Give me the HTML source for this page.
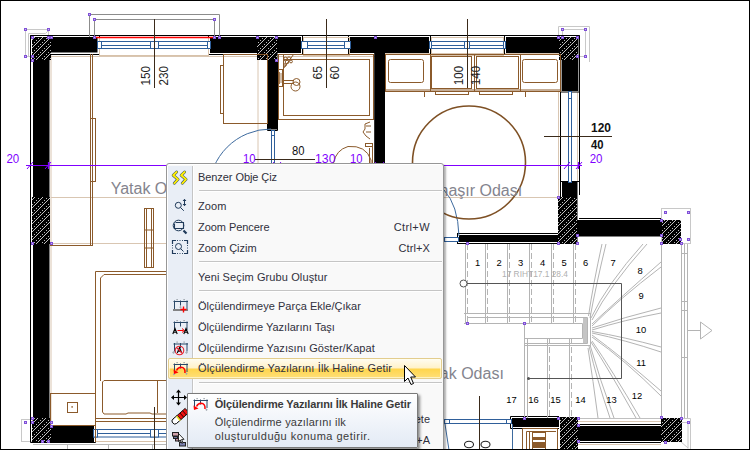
<!DOCTYPE html>
<html><head><meta charset="utf-8">
<style>
html,body{margin:0;padding:0;width:750px;height:450px;overflow:hidden;background:#fff;}
body{position:relative;font-family:"Liberation Sans",sans-serif;}
#cad{position:absolute;left:0;top:0;}
.menu{position:absolute;left:166px;top:163px;width:276px;height:300px;background:#f9f9f9;border:1px solid #979797;border-radius:3px 3px 0 0;box-shadow:2px 2px 2px rgba(0,0,0,0.3), inset 1px 1px 0 #fff;}
.menu .col{position:absolute;left:1px;top:2px;width:24px;height:100%;background:#e9eef6;border-right:1px solid #c5c5c5;box-shadow:1px 0 0 #fff;}
.menu .t,.menu .s{position:absolute;left:31px;font-size:11px;line-height:12px;color:#30303c;white-space:nowrap;}
.menu .s{left:auto;right:13px;}
.menu .sep{position:absolute;left:32px;right:1px;height:0;border-top:1px solid #c5c5c5;border-bottom:1px solid #fff;}
.menu .hl{position:absolute;left:1px;width:272px;height:19px;top:194px;border:1px solid #e3cd8e;border-radius:2px;background:linear-gradient(#fffcf0 0%,#fff2c8 48%,#ffd54c 52%,#ffdf78 100%);box-shadow:inset 0 0 0 1px rgba(255,255,240,0.6);}
.menu svg{position:absolute;}
.tip{position:absolute;left:187px;top:393px;width:229px;height:53px;border:1px solid #7a7a7a;border-radius:1px;background:linear-gradient(#ffffff,#e3eaf5);box-shadow:2px 2px 3px rgba(0,0,0,0.45);color:#3a3a3a;white-space:nowrap;}
.tip span{position:absolute;left:26.7px;font-size:11px;line-height:12px;}
.tip .tt{font-weight:bold;}
.tip svg{position:absolute;}
</style></head><body>
<svg id="cad" width="750" height="450" viewBox="0 0 750 450">
<defs>
<pattern id="hatch" patternUnits="userSpaceOnUse" width="8" height="8" x="0" y="0">
<rect width="8" height="8" fill="#000"/>
<path d="M-1 9 L9 -1" stroke="#d8d8d8" stroke-width="0.9"/>
<rect x="2" y="2" width="1" height="1" fill="#bbb"/><rect x="6" y="6" width="1" height="1" fill="#bbb"/>
<rect x="4" y="0" width="1" height="1" fill="#bbb"/><rect x="0" y="4" width="1" height="1" fill="#bbb"/>
</pattern>
</defs>
<rect x="0.5" y="0.5" width="749" height="449" fill="#fff" stroke="#000" stroke-width="1"/>

<!-- light tan room boundaries -->
<g stroke="#d9c6b2" stroke-width="1" fill="none">
<line x1="51" y1="54" x2="51" y2="425"/>
<line x1="50" y1="56.5" x2="375" y2="56.5"/>
<line x1="51" y1="197.5" x2="166" y2="197.5"/>
<line x1="51" y1="243.5" x2="166" y2="243.5"/>
<line x1="258" y1="58" x2="258" y2="163"/>
<line x1="443" y1="197.5" x2="558" y2="197.5"/>
<line x1="558.5" y1="92" x2="558.5" y2="197"/>
<line x1="577.5" y1="92" x2="577.5" y2="181"/>
<line x1="385" y1="53.5" x2="560" y2="53.5"/>
<line x1="578" y1="421.5" x2="661" y2="421.5"/>
<line x1="578" y1="444.5" x2="661" y2="444.5"/>
</g>

<g fill="none" stroke="#c8c8c8" stroke-width="1">
<rect x="25.5" y="29.5" width="23" height="27"/>
<path d="M28.5 56 V33.5 H45.5 L48 31"/>
<path d="M558.5 37 V26.5 H589.5 V62"/>
<path d="M562.5 37 V29.5 H585.5 V56.5 H578"/>
<rect x="661.5" y="208.5" width="29" height="35"/>
<path d="M661.5 418.5 H690.5 V449 M665 422.5 H688 V448.5 M680 441 L688 448"/>
<line x1="578" y1="418.5" x2="661" y2="418.5" stroke="#c0c0c0"/>
<rect x="21.5" y="419.5" width="12" height="22"/>
</g>
<!-- walls -->
<g fill="#000">
<rect x="33" y="37" width="64.5" height="15.5"/>
<rect x="33" y="37" width="16.5" height="388"/>
<rect x="33" y="426" width="61" height="16"/>
<rect x="210" y="37" width="91" height="16"/>
<rect x="268" y="53" width="9.5" height="76.5"/>
<rect x="350" y="37" width="79" height="16"/>
<rect x="374.2" y="53" width="10.8" height="115"/>
<rect x="506" y="37" width="72.5" height="16"/>
<rect x="561.6" y="53" width="16.8" height="38"/>
<rect x="562" y="182" width="15.5" height="62"/>
<rect x="577" y="220" width="104" height="16.5"/>
<rect x="459" y="235" width="100" height="7"/>
<rect x="512" y="418" width="47" height="9"/>
<rect x="578" y="426" width="84" height="15"/>
</g>
<g fill="none" stroke="#000" stroke-width="1">
<path d="M30.5 420 V35.5 H99.5 V54.5 H50"/>
<path d="M267.5 54.5 H208.5 V35.5 H302.5 V54.5 H277.5 M267.5 54.5 V130.5 H277.5 V60"/>
<path d="M348.5 54.5 V35.5 H430.5 V54.5"/>
<path d="M504.5 54.5 V35.5 H579.5 V195 M560.5 54.5 V197 M560.5 92 H579"/>
<path d="M560.5 181.5 H579"/>
<rect x="457.5" y="233.5" width="101" height="10"/>
<path d="M579 218.5 H661 M578 424.5 H661 M578 442.5 H661"/>
<path d="M30.5 420 V442.5 H95.5 V424.5"/>
<path d="M33 444.5 H166 M67.5 444 V449 M108.5 444 V449 M152.5 444 V449" stroke="#b8b8b8"/>
<path d="M559 416.5 H510.5 V428.5 H559"/>
</g>
<!-- hatches -->
<g fill="url(#hatch)">
<rect x="32" y="37" width="19" height="23"/>
<rect x="257" y="37" width="20" height="23"/>
<rect x="559" y="37" width="19" height="23"/>
<rect x="32" y="197" width="18" height="47"/>
<rect x="32" y="418" width="19" height="24"/>
<rect x="558" y="197" width="19" height="47"/>
<rect x="662" y="220" width="19" height="24"/>
<rect x="560" y="417" width="18" height="33"/>
<rect x="661" y="418" width="21" height="24"/>
</g>

<!-- windows -->
<g fill="none" stroke="#d8c2aa" stroke-width="1">
<rect x="99.5" y="37.5" width="109" height="18"/>
<rect x="303.5" y="37.5" width="46" height="18"/>
<rect x="431.5" y="37.5" width="72" height="18"/>
</g>
<path d="M30.5 35.5 H579.5" stroke="#000" stroke-width="1"/>
<g fill="#fff" stroke="#2f5f9a" stroke-width="1">
<rect x="97.5" y="41.5" width="113" height="7"/>
<line x1="101" y1="45.5" x2="208" y2="45.5"/>
<rect x="97.5" y="41.5" width="4" height="7"/>
<rect x="207.5" y="41.5" width="3" height="7"/>
<rect x="150.5" y="41.5" width="4" height="7"/>
<rect x="154.5" y="41.5" width="4" height="7"/>
<rect x="301.5" y="41.5" width="49" height="7"/>
<line x1="307" y1="45.5" x2="344" y2="45.5"/>
<rect x="301.5" y="41.5" width="6" height="7"/>
<rect x="344.5" y="41.5" width="6" height="7"/>
<rect x="429.5" y="41.5" width="76" height="7"/>
<line x1="431" y1="45.5" x2="504" y2="45.5"/>
<rect x="429.5" y="41.5" width="2" height="7"/>
<rect x="464.5" y="41.5" width="3" height="7"/>
<rect x="467.5" y="41.5" width="2" height="7"/>
<rect x="503.5" y="41.5" width="2" height="7"/>
<rect x="568.5" y="91.5" width="3" height="91"/>
<line x1="568.5" y1="98.5" x2="571.5" y2="98.5"/>
<rect x="271.5" y="130.5" width="3" height="33"/>
<line x1="271.5" y1="135.5" x2="274.5" y2="135.5"/>
<rect x="93.5" y="429.5" width="80" height="7.5"/>
<line x1="97" y1="433.5" x2="170" y2="433.5"/>
<rect x="93.5" y="429.5" width="4" height="7.5"/>
<rect x="150.5" y="429.5" width="4" height="7.5"/><rect x="154.5" y="429.5" width="4" height="7.5"/>
<rect x="444.5" y="419.5" width="67" height="4"/>
<rect x="444.5" y="419.5" width="5" height="4"/><rect x="506.5" y="419.5" width="5" height="4"/>
<rect x="444.5" y="237.5" width="14" height="4"/>
</g>
<g fill="none" stroke="#3d6a9e" stroke-width="1">
<path d="M271 129 A62 62 0 0 0 209 191"/>
<path d="M444 190 Q458 205 459 236"/>
<path d="M445 424 L449 450 M512.5 424 V450"/>
</g>

<!-- red line -->
<line x1="95" y1="37.5" x2="213" y2="37.5" stroke="#f00" stroke-width="1.5"/>

<!-- grey selection dims -->
<g fill="none" stroke="#8c8c8c" stroke-width="1">
<path d="M89.5 37 V14.5 H219.5 V37"/>
<path d="M94.5 37 V19.5 H214.5 V37"/>
</g>


<!-- brown furniture -->
<g fill="none" stroke="#8b5a2b" stroke-width="1">
<path d="M90.5 54 V245 M92.5 54 V245 M50 245.5 H93"/>
<rect x="90.5" y="118.5" width="5" height="63"/>
<rect x="144.5" y="208.5" width="9" height="59"/>
<path d="M146.5 209 V267 M151.5 209 V267 M145 230 H153 M145 248 H153"/>
<path d="M95.5 425 V271.5 H170"/>
<path d="M100.5 381 V278 L104 274.5 H170"/>
<path d="M102.5 382 L104 380.5 H166 M102.5 382 V412 L104 414 H126 L128 413 H150 L152 414 H166"/>
<path d="M157.5 381 V413"/>
<rect x="50.5" y="393.5" width="45" height="32"/>
<rect x="67.5" y="402.5" width="10" height="10"/>
<path d="M95 418.5 H170 M95 421.5 H170"/>
<path d="M95.5 424 V442"/>
<rect x="223.5" y="54.5" width="44" height="69"/>
<rect x="220.5" y="65.5" width="3" height="48"/>
<rect x="278.5" y="54.5" width="95" height="65"/>
<rect x="283.5" y="59.5" width="86" height="56"/>
<path d="M283.5 54.5 V68.5 L293.5 54.5"/>
<circle cx="285.5" cy="59" r="1.8"/><circle cx="289" cy="58.5" r="1.6"/><circle cx="287" cy="62" r="1.8"/><circle cx="291" cy="61.5" r="1.4"/><circle cx="285" cy="65" r="1.3"/>
<rect x="278.5" y="69.5" width="4" height="17"/>
<path d="M279.5 72 V84 M281 73 V83" stroke-width="0.8"/>
<path d="M282.5 80.5 H293 M282.5 83.5 H293"/>
<circle cx="296.5" cy="82" r="3.5"/><circle cx="295.5" cy="86.5" r="4.5"/>
<path d="M333.5 163 Q336 150 348 146.5 Q366 145 371 160 V163"/>
<path d="M369.5 148 V163 M372.5 145 V163"/>
<rect x="365.5" y="143.5" width="7" height="3"/>
<path d="M370 122 L365 124 V129 L363 132 L366 136 L370 139 M366 126 H371 M366 132 H371" />
<rect x="385.5" y="54.5" width="175" height="37"/>
<line x1="385" y1="90" x2="560" y2="90"/>
<rect x="388.5" y="59.5" width="35" height="23" rx="2"/>
<rect x="431.5" y="56.5" width="40" height="32"/>
<rect x="476.5" y="56.5" width="42" height="32"/>
<rect x="522.5" y="59.5" width="35" height="23" rx="2"/>
<path d="M430.5 54 V91 M474.5 54 V91 M520.5 54 V91"/>
<rect x="435.5" y="91.5" width="33" height="3"/>
<rect x="479.5" y="91.5" width="33" height="3"/>
<path d="M424.5 91 V97 M525.5 91 V97"/>
<path d="M522.5 450 V428.5 H557.5 V450 M526.5 450 V431.5 H556 M529.5 450 V431.5"/>
<rect x="532.5" y="432.5" width="13" height="18"/>
<path d="M545.5 433 V450"/>
</g>
<circle cx="469" cy="162.5" r="56.5" fill="none" stroke="#7e5024" stroke-width="1.6"/>

<!-- stair -->
<g fill="none" stroke="#b4b4b4" stroke-width="1">
<path d="M465.5 244 V323 M485.5 244 V323 M507.5 244 V323 M529.5 244 V323 M551.5 244 V323 M573.5 244 V323"/>
<path d="M467.5 244 V323 M487.5 244 V323 M509.5 244 V323 M531.5 244 V323 M553.5 244 V323 M575.5 244 V323" stroke-dasharray="6 3"/>
<path d="M464 313.5 H590.5 V345.5 H525 M467 317.5 H587.5 V343.5 H525 M464 323.5 H582.5 V338.5 H525 M524.5 323 V418"/>
<rect x="583" y="318" width="4" height="25" fill="#c4c4c4" stroke="none"/>
<path d="M527.5 338 V418 M547.5 338 V418 M569.5 338 V418"/>
<path d="M549.5 338 V418 M571.5 338 V418" stroke-dasharray="6 3"/>
<path d="M661.5 244 V418"/>
<path d="M681.5 244 V418 M684.5 244 V418 M687.5 244 V418 M681 253.5 H688 M681 301.5 H688 M681 310.5 H688 M681 357.5 H688"/>
<path d="M606 244 Q596 285 590 318 M647 244 Q610 285 592 320 M661 262 Q620 298 592 324 M661 308 Q625 317 592 328 M661 352 Q625 340 592 333 M661 396 Q625 360 592 337 M640 418 Q612 370 592 341 M614 418 Q600 380 590 345 M598 418 Q593 380 588 348"/>
<path d="M602 244 Q593 285 588.5 316 M643 244 Q607 284 591 318 M661 267 Q618 300 592 326 M661 313 Q624 320 592 330 M661 347 Q624 337 592 331.5 M661 391 Q622 357 592 335 M636 418 Q609 370 591 342 M610 418 Q597 380 589 346"/>
<path d="M688 330.5 H700 M700.5 322 V339 L712 330.5 Z"/>
</g>
<path d="M466 283.5 H621.5 V378.5 H528" fill="none" stroke="#555" stroke-width="1"/>
<circle cx="463.5" cy="283.5" r="3.5" fill="#fff" stroke="#555" stroke-width="1"/>
<circle cx="528.5" cy="378.5" r="1.5" fill="#555"/>
<rect x="533" y="437" width="12" height="3" fill="#8b5a2b"/><rect x="532" y="442" width="14" height="6" fill="#8b5a2b"/>
<rect x="71.5" y="406" width="1.2" height="1.8" fill="#8b5a2b"/>
<line x1="96" y1="441.5" x2="166" y2="441.5" stroke="#d8c2aa"/>
<!-- dimension lines -->
<g stroke="#3a2a1a" stroke-width="1">
<line x1="154.5" y1="19" x2="154.5" y2="88"/>
<line x1="326.5" y1="19" x2="326.5" y2="88"/>
<line x1="467.5" y1="19" x2="467.5" y2="88"/>
<line x1="544" y1="136.5" x2="612" y2="136.5"/>
<line x1="255" y1="159.5" x2="315" y2="159.5"/>
<line x1="479.5" y1="396" x2="479.5" y2="450"/>
<line x1="154.5" y1="407" x2="154.5" y2="450"/>
</g>
<g font-family="Liberation Sans" font-size="13" fill="#222">
<text transform="translate(150,85.5) rotate(-90)" textLength="19.5" lengthAdjust="spacingAndGlyphs">150</text>
<text transform="translate(168,85.5) rotate(-90)" textLength="19.5" lengthAdjust="spacingAndGlyphs">230</text>
<text transform="translate(322,79.5) rotate(-90)" textLength="13.5" lengthAdjust="spacingAndGlyphs">65</text>
<text transform="translate(339,79.5) rotate(-90)" textLength="13.5" lengthAdjust="spacingAndGlyphs">60</text>
<text transform="translate(463,85) rotate(-90)" textLength="19" lengthAdjust="spacingAndGlyphs">100</text>
<text transform="translate(480,85) rotate(-90)" textLength="19" lengthAdjust="spacingAndGlyphs">140</text>
</g>
<g font-family="Liberation Sans" font-size="13" fill="#111">
<text x="591" y="131.7" font-weight="bold" textLength="20" lengthAdjust="spacingAndGlyphs">120</text>
<text x="591" y="148.6" font-weight="bold" textLength="12.5" lengthAdjust="spacingAndGlyphs">40</text>
<text x="292" y="155" textLength="12.5" lengthAdjust="spacingAndGlyphs">80</text>
</g>
<!-- purple dimension -->
<g stroke="#8000ff" fill="none">
<line x1="26" y1="165.5" x2="582" y2="165.5" stroke-width="1.1"/>
<path d="M27 169 L33 162 M45 169 L51 162 M564 169 L570 162 M576 169 L582 162 M269 168 L274 162 M276 168 L281 162 M371 168 L376 162 M379 168 L384 162" stroke-width="1"/>
<path d="M48.5 162 V169 M578.5 162 V169" stroke-width="1.2"/>
</g>
<g font-family="Liberation Sans" font-size="13" fill="#8000ff">
<text x="6.4" y="162.7" textLength="12.8" lengthAdjust="spacingAndGlyphs">20</text>
<text x="243" y="162.5" textLength="12.5" lengthAdjust="spacingAndGlyphs">10</text>
<text x="315" y="163" textLength="20.5" lengthAdjust="spacingAndGlyphs">130</text>
<text x="350" y="163" textLength="12.5" lengthAdjust="spacingAndGlyphs">10</text>
<text x="589.7" y="162.6" textLength="12.8" lengthAdjust="spacingAndGlyphs">20</text>
</g>
<!-- room names -->
<g font-family="Liberation Sans" font-size="16" fill="#84848e">
<text x="110.7" y="193.6">Yatak Odası</text>
<text x="414.6" y="195.6">Çamaşır Odası</text>
<text x="417" y="379">Yatak Odası</text>
</g>
<!-- stair numbers -->
<g font-family="Liberation Sans" font-size="9.4" fill="#000" text-anchor="middle">
<text x="477.5" y="266">1</text><text x="499" y="266">2</text><text x="520.5" y="266">3</text>
<text x="542.5" y="266">4</text><text x="564" y="266">5</text><text x="585.5" y="266">6</text>
<text x="613" y="266">7</text><text x="640" y="274">8</text><text x="641" y="299">9</text>
<text x="641" y="333">10</text><text x="641" y="366">11</text><text x="637" y="399">12</text>
<text x="611.5" y="403">13</text><text x="580.5" y="403">14</text><text x="555.5" y="403">15</text>
<text x="533.5" y="403">16</text><text x="511.5" y="403">17</text>
</g>
<text x="502" y="277" font-family="Liberation Sans" font-size="9" fill="#b0b0b0" textLength="66" lengthAdjust="spacingAndGlyphs">17 RIHT17.1 28.4</text>
<g fill="none" stroke="#222" stroke-width="1.1">
<ellipse cx="469" cy="444.5" rx="4.5" ry="3.3"/><ellipse cx="485.5" cy="444.5" rx="4.5" ry="3.3"/>
</g>

<!-- purple handles -->
<g fill="#c9b4f0" stroke="#8050d8" stroke-width="1">
<rect x="24.5" y="28.5" width="2" height="2"/><rect x="47.5" y="28.5" width="2" height="2"/><rect x="24.5" y="55.5" width="2" height="2"/><rect x="31.5" y="36.5" width="2" height="2"/><rect x="47.5" y="36.5" width="2" height="2"/><rect x="50.5" y="36.5" width="2" height="2"/><rect x="31.5" y="55.5" width="2" height="2"/><rect x="31.5" y="59.5" width="2" height="2"/><rect x="88.5" y="13.5" width="2" height="2"/><rect x="93.5" y="18.5" width="2" height="2"/><rect x="93.5" y="36.5" width="2" height="2"/><rect x="213.5" y="18.5" width="2" height="2"/><rect x="213.5" y="36.5" width="2" height="2"/><rect x="218.5" y="36.5" width="2" height="2"/><rect x="256.5" y="36.5" width="2" height="2"/><rect x="275.5" y="36.5" width="2" height="2"/><rect x="275.5" y="59.5" width="2" height="2"/><rect x="374.5" y="36.5" width="2" height="2"/><rect x="561.5" y="28.5" width="2" height="2"/><rect x="557.5" y="36.5" width="2" height="2"/><rect x="584.5" y="28.5" width="2" height="2"/><rect x="561.5" y="36.5" width="2" height="2"/><rect x="576.5" y="36.5" width="2" height="2"/><rect x="576.5" y="55.5" width="2" height="2"/><rect x="584.5" y="55.5" width="2" height="2"/><rect x="557.5" y="196.5" width="2" height="2"/><rect x="576.5" y="234.5" width="2" height="2"/><rect x="576.5" y="242.5" width="2" height="2"/><rect x="557.5" y="242.5" width="2" height="2"/><rect x="660.5" y="219.5" width="2" height="2"/><rect x="664.5" y="211.5" width="2" height="2"/><rect x="687.5" y="211.5" width="2" height="2"/><rect x="687.5" y="238.5" width="2" height="2"/><rect x="660.5" y="234.5" width="2" height="2"/><rect x="660.5" y="242.5" width="2" height="2"/><rect x="679.5" y="238.5" width="2" height="2"/><rect x="680.5" y="242.5" width="2" height="2"/><rect x="466.5" y="242.5" width="2" height="2"/><rect x="466.5" y="322.5" width="2" height="2"/><rect x="523.5" y="322.5" width="2" height="2"/><rect x="31.5" y="242.5" width="2" height="2"/><rect x="50.5" y="242.5" width="2" height="2"/><rect x="24.5" y="421.5" width="2" height="2"/><rect x="31.5" y="417.5" width="2" height="2"/><rect x="31.5" y="421.5" width="2" height="2"/><rect x="50.5" y="421.5" width="2" height="2"/><rect x="50.5" y="425.5" width="2" height="2"/><rect x="41.5" y="440.5" width="2" height="2"/><rect x="47.5" y="440.5" width="2" height="2"/><rect x="523.5" y="417.5" width="2" height="2"/><rect x="557.5" y="417.5" width="2" height="2"/><rect x="577.5" y="417.5" width="2" height="2"/><rect x="577.5" y="424.5" width="2" height="2"/><rect x="577.5" y="440.5" width="2" height="2"/><rect x="660.5" y="416.5" width="2" height="2"/><rect x="680.5" y="417.5" width="2" height="2"/><rect x="687.5" y="421.5" width="2" height="2"/><rect x="664.5" y="441.5" width="2" height="2"/>
</g>
</svg>

<div class="menu">
<div class="col"></div>
<div class="hl"></div>
<div class="sep" style="top:26px"></div>
<div class="sep" style="top:97px"></div>
<div class="sep" style="top:126px"></div>
<div class="sep" style="top:218px"></div>
<span class="t" style="top:6.8px;letter-spacing:-0.07px">Benzer Obje Çiz</span>
<span class="t" style="top:36.2px;letter-spacing:0.14px">Zoom</span>
<span class="t" style="top:57px;letter-spacing:-0.05px">Zoom Pencere</span>
<span class="s" style="top:57px;letter-spacing:0.41px">Ctrl+W</span>
<span class="t" style="top:78px">Zoom Çizim</span>
<span class="s" style="top:78px;letter-spacing:0.1px">Ctrl+X</span>
<span class="t" style="top:106.7px;letter-spacing:0.11px">Yeni Seçim Grubu Oluştur</span>
<span class="t" style="top:135.9px;letter-spacing:0.03px">Ölçülendirmeye Parça Ekle/Çıkar</span>
<span class="t" style="top:156.8px;letter-spacing:0.02px">Ölçülendirme Yazılarını Taşı</span>
<span class="t" style="top:177.5px;letter-spacing:0.07px">Ölçülendirme Yazısını Göster/Kapat</span>
<span class="t" style="top:198.2px;letter-spacing:0.14px">Ölçülendirme Yazılarını İlk Haline Getir</span>
<span class="t" style="top:228px">Taşı</span>
<span class="t" style="top:249px">Sil</span>
<span class="s" style="top:249px">Delete</span>
<span class="t" style="top:270px">Seç</span>
<span class="s" style="top:270px">Ctrl+A</span>
<svg style="left:0;top:0" width="26" height="290" viewBox="167 164 26 290">
<g fill="none" stroke-linejoin="round" stroke-linecap="round">
<path d="M176.6 172 L173.2 175.3 L178 179.3 L174.3 183.3 M184.6 172 L181.2 175.3 L186 179.3 L182.3 183.3" stroke="#2a4a7a" stroke-width="2.9"/>
<path d="M176.6 172 L173.2 175.3 L178 179.3 L174.3 183.3 M184.6 172 L181.2 175.3 L186 179.3 L182.3 183.3" stroke="#ffee00" stroke-width="1.9"/>
</g>
<g fill="none" stroke="#1f3a5a" stroke-width="1">
<circle cx="178.3" cy="205.3" r="3"/><path d="M180.5 207.5 L183.8 210.8 M184.5 199.5 V205.5"/>
<path d="M183 201 L184.5 199.3 L186 201 M183 204 L184.5 205.7 L186 204" />
<circle cx="178.5" cy="225.5" r="5.3"/><path d="M175.5 222.5 H183.5 V228.5 H174.5 V223.5" stroke-width="1.1"/>
<path d="M183.5 230.5 L186.5 233.5" stroke-width="2.2"/>
<path d="M172.5 244 V240.5 H176 M184 240.5 H187.5 V244 M187.5 250 V253.5 H184 M176 253.5 H172.5 V250" stroke-width="1.2"/>
<path d="M177 240.5 H183 M172.5 245 V249 M187.5 245 V249 M177 253.5 H183" stroke-dasharray="1 1.5" stroke-width="0.9"/>
<circle cx="178.5" cy="246.5" r="3"/><path d="M180.7 248.7 L183.5 251.5"/>
</g>
<rect x="176.5" y="299.0" width="1.2" height="1.2" fill="#8c949c"/><rect x="183.5" y="299.0" width="1.2" height="1.2" fill="#8c949c"/>
<path d="M173.5 301.5 H188 M174.5 300.5 V309.0 M180.5 300.5 V305.5 M187 300.5 V309.0" stroke="#2a4868" stroke-width="1" fill="none"/>
<path d="M180.5 306 V308.5 M179.3 307.2 H181.7" stroke="#a0a8b0" stroke-width="0.8"/>
<path d="M173 310 H188" stroke="#5e5e5e" stroke-width="1.5"/>
<path d="M183.5 306.5 V312.5 M180.5 309.5 H186.5" stroke="#f00" stroke-width="1.4"/>
<rect x="176.5" y="320.0" width="1.2" height="1.2" fill="#8c949c"/><rect x="183.5" y="320.0" width="1.2" height="1.2" fill="#8c949c"/>
<path d="M173.5 322.5 H188 M174.5 321.5 V330.0 M180.5 321.5 V326.5 M187 321.5 V330.0" stroke="#2a4868" stroke-width="1" fill="none"/>
<path d="M177.5 330.5 H183.5" stroke="#f00" stroke-width="1"/><path d="M182 328.5 L184.5 330.5 L182 332.5" fill="none" stroke="#f00" stroke-width="1"/>
<path d="M172.8 334 L175 328.5 L177.2 334 M173.6 332.2 H176.4 M183.8 334 L186 328.5 L188.2 334 M184.6 332.2 H187.4" fill="none" stroke="#000" stroke-width="1.1"/>
<rect x="176.5" y="341.5" width="1.2" height="1.2" fill="#8c949c"/><rect x="183.5" y="341.5" width="1.2" height="1.2" fill="#8c949c"/>
<path d="M173.5 344 H188 M174.5 343 V351.5 M180.5 343 V348 M187 343 V351.5" stroke="#2a4868" stroke-width="1" fill="none"/>
<path d="M173.5 351 L175 352.5 L173.5 354 L172 352.5 Z M186.5 351 L188 352.5 L186.5 354 L185 352.5 Z" fill="#a8b0b8"/>
<path d="M177.3 353 L179.5 347.5 L181.7 353 M178.1 351.2 H180.9" fill="none" stroke="#000" stroke-width="1.1"/>
<circle cx="179.5" cy="350.5" r="4.3" fill="none" stroke="#e8202a" stroke-width="1.1"/>
<path d="M176.5 347.5 L182.5 353.5" stroke="#e8202a" stroke-width="1.1"/>
<rect x="176.5" y="362.0" width="1.2" height="1.2" fill="#8c949c"/><rect x="183.5" y="362.0" width="1.2" height="1.2" fill="#8c949c"/>
<path d="M173.5 364.5 H188 M174.5 363.5 V372.0 M180.5 363.5 V368.5 M187 363.5 V372.0" stroke="#2a4868" stroke-width="1" fill="none"/>
<path d="M174 373 L175.2 374.2 L174 375.4 L172.8 374.2 Z M186.5 372.5 L187.7 373.7 L186.5 374.9 L185.3 373.7 Z" fill="#a0a8b0"/>
<path d="M185 373 Q185.5 367.5 181 367.3 Q178 367.3 176.5 370.5" fill="none" stroke="#f00" stroke-width="1.5"/>
<path d="M173.5 369.5 L174 374 L178.5 372.5 Z" fill="#f00"/>
<g fill="#000">
<path d="M178.5 391 V404 M172.5 397.5 H185.5" stroke="#000" stroke-width="1.2"/>
<path d="M178.5 389.5 L176 392.5 H181 Z M178.5 405.5 L176 402.5 H181 Z M171 397.5 L174 395 V400 Z M187 397.5 L184 395 V400 Z"/>
</g>
<path d="M177.1 415.5 L185.15 408.4 L188.85 412.6 L180.8 419.7 Z" fill="#ee1010" stroke="#000" stroke-width="0.9"/>
<path d="M179.95 413 L183.65 417.2 M182.55 410.7 L186.25 414.9" stroke="#000" stroke-width="0.8"/>
<path d="M177.1 415.5 L180.8 419.7 L176.5 423.5 Q174.6 425 172.8 423 L172.6 422.8 Q171 420.8 173 419 Z" fill="#fff" stroke="#000" stroke-width="1"/>
<path d="M176.6 416.2 L180.3 420.4" stroke="#f5e020" stroke-width="1.5"/>
<rect x="179.5" y="442.5" width="6" height="3.5" fill="#7a80b0" stroke="#222" stroke-width="1"/>
<rect x="175.5" y="438.5" width="6" height="2.5" fill="#c88c9c" stroke="#222" stroke-width="1"/>
<rect x="173.5" y="436.5" width="4" height="2" fill="#6a70a0" stroke="#222" stroke-width="1"/>
<rect x="172.5" y="432.5" width="6" height="3.5" fill="#d0a0aa" stroke="#222" stroke-width="1"/>
<path d="M178.5 433.5 V441.5 L180.3 440 L181.8 443.3 L183 442.7 L181.6 439.5 L184 439.3 Z" fill="#fff" stroke="#000" stroke-width="0.8" stroke-linejoin="round"/>
</svg>
</div>
<div class="tip">
<svg style="left:0;top:0" width="30" height="25" viewBox="188 394 30 25">
<g transform="translate(20,36)">
<rect x="176.5" y="362.0" width="1.2" height="1.2" fill="#8c949c"/><rect x="183.5" y="362.0" width="1.2" height="1.2" fill="#8c949c"/>
<path d="M173.5 364.5 H188 M174.5 363.5 V372.0 M180.5 363.5 V368.5 M187 363.5 V372.0" stroke="#2a4868" stroke-width="1" fill="none"/>
<path d="M186.5 372.5 L187.7 373.7 L186.5 374.9 L185.3 373.7 Z" fill="#a0a8b0"/>
<path d="M185 373 Q185.5 367.5 181 367.3 Q178 367.3 176.5 370.5" fill="none" stroke="#f00" stroke-width="1.5"/>
<path d="M173.5 369.5 L174 374 L178.5 372.5 Z" fill="#f00"/>
</g></svg>
<span class="tt" style="top:3.7px;letter-spacing:-0.12px">Ölçülendirme Yazılarını İlk Haline Getir</span>
<span class="td" style="top:22.4px;letter-spacing:0.2px">Ölçülendirme yazılarını ilk</span>
<span class="td" style="top:35.7px;letter-spacing:0.5px">oluşturulduğu konuma getirir.</span>
</div>
<svg style="position:absolute;left:403px;top:364px" width="16" height="22" viewBox="0 0 16 22">
<path d="M1.5 1.5 V17.5 L5 14 L8 20.5 L10.5 19.5 L7.7 13 H12.5 Z" fill="#fff" stroke="#000" stroke-width="1" stroke-linejoin="round"/>
</svg>
<div style="position:absolute;left:0;top:0;width:748px;height:448px;border:1px solid #000;pointer-events:none"></div>
</body></html>
